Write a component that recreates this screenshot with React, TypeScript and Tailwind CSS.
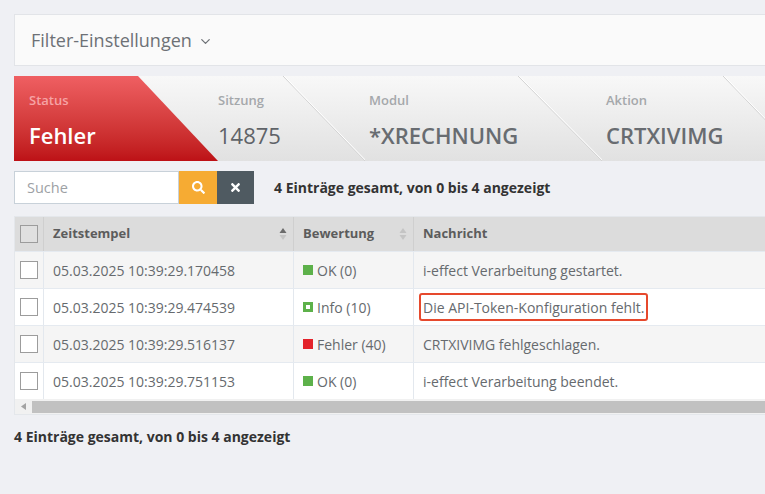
import { ChevronDown } from "lucide-react";
import { FaSearch, FaTimes } from "react-icons/fa";

type Rating = "ok" | "info" | "error";

const ROWS: { time: string; rating: Rating; label: string; msg: string; mark?: boolean }[] = [
  { time: "05.03.2025 10:39:29.170458", rating: "ok", label: "OK (0)", msg: "i-effect Verarbeitung gestartet." },
  { time: "05.03.2025 10:39:29.474539", rating: "info", label: "Info (10)", msg: "Die API-Token-Konfiguration fehlt.", mark: true },
  { time: "05.03.2025 10:39:29.516137", rating: "error", label: "Fehler (40)", msg: "CRTXIVIMG fehlgeschlagen." },
  { time: "05.03.2025 10:39:29.751153", rating: "ok", label: "OK (0)", msg: "i-effect Verarbeitung beendet." },
];

function RatingIcon({ rating }: { rating: Rating }) {
  if (rating === "info") {
    return (
      <span className="w-[10px] h-[10px] bg-[#5db14a] flex items-center justify-center shrink-0">
        <span className="w-[4px] h-[4px] bg-white" />
      </span>
    );
  }
  return (
    <span
      className={
        rating === "ok"
          ? "w-[10px] h-[10px] bg-[#5db14a] shrink-0"
          : "w-[10px] h-[10px] bg-[#e3222a] shrink-0"
      }
    />
  );
}

function SortIcon({ active }: { active?: boolean }) {
  return (
    <svg width="8" height="14" viewBox="0 0 8 14">
      <path d="M4 1 L7.5 6 L0.5 6 Z" fill={active ? "#6b6b6b" : "#c4c4c4"} />
      <path d="M4 13 L7.5 8 L0.5 8 Z" fill="#c4c4c4" />
    </svg>
  );
}

function Diagonal({ w }: { w: number }) {
  return (
    <svg width={w} height="85" viewBox={`0 0 ${w} 85`} className="shrink-0">
      <line x1="0" y1="0" x2={w} y2="85" stroke="#d3d3d3" strokeWidth="1" />
      <line x1="1.2" y1="0" x2={w + 1.2} y2="85" stroke="#ffffff" strokeWidth="1" />
    </svg>
  );
}

function Segment({ label, value, width }: { label: string; value: string; width: number }) {
  return (
    <div className="shrink-0 flex flex-col pt-[16px] pl-[4px]" style={{ width }}>
      <span className="text-[13px] leading-[16px] font-semibold text-[#a5a8ab] whitespace-nowrap">{label}</span>
      <span className="mt-[13px] text-[22px] leading-[28px] font-semibold text-[#686c71] whitespace-nowrap">{value}</span>
    </div>
  );
}

function Checkbox({ header }: { header?: boolean }) {
  return (
    <span
      className={
        header
          ? "w-[18px] h-[18px] border border-[#9c9c9c] bg-[#e0e0e0] block"
          : "w-[18px] h-[18px] border border-[#9c9c9c] bg-white block"
      }
    />
  );
}

export default function App() {
  return (
    <div className="w-[765px] h-[494px] overflow-hidden bg-[#eff0f4] font-['Open_Sans',sans-serif]">
      <div className="w-[1000px] pl-[14px] pt-[14px] flex flex-col">
        {/* Filter panel */}
        <div className="h-[52px] bg-[#fafafa] border border-[#e2e4e8] flex items-center pl-[16px] gap-[6px]">
          <span className="text-[18px] text-[#6d7176]">Filter-Einstellungen</span>
          <ChevronDown size={15} strokeWidth={2} className="text-[#6d7176] mt-[2px]" />
        </div>

        {/* Breadcrumb */}
        <div className="mt-[10px] h-[85px] flex bg-gradient-to-b from-[#f8f8f8] to-[#e1e1e1] overflow-hidden">
          <div className="w-[204px] shrink-0 flex flex-col pt-[16px] pl-[15px] bg-gradient-to-b from-[#ef5f62] to-[#bd1016] [clip-path:polygon(0_0,124px_0,204px_100%,0_100%)]">
            <span className="text-[13px] leading-[16px] font-semibold text-[#f6a3a5]">Status</span>
            <span className="mt-[13px] text-[22px] leading-[28px] font-semibold text-white">Fehler</span>
          </div>
          <div className="w-[65px] shrink-0 flex flex-col pt-[16px]">
            <span className="text-[13px] leading-[16px] font-semibold text-[#a5a8ab]">Sitzung</span>
            <span className="mt-[13px] text-[22px] leading-[28px] text-[#5f6368]">14875</span>
          </div>
          <Diagonal w={82} />
          <Segment label="Modul" value="*XRECHNUNG" width={153} />
          <Diagonal w={84} />
          <Segment label="Aktion" value="CRTXIVIMG" width={121} />
          <Diagonal w={82} />
        </div>

        {/* Search row */}
        <div className="mt-[10px] h-[33px] flex items-center">
          <div className="w-[165px] h-[33px] bg-white border border-[#c8d1d9] flex items-center pl-[12px]">
            <span className="text-[14.5px] text-[#9da1a5]">Suche</span>
          </div>
          <div className="w-[38px] h-[33px] bg-[#f6ab33] flex items-center justify-center">
            <FaSearch size={13} className="text-white" />
          </div>
          <div className="w-[37px] h-[33px] bg-[#4f5a61] flex items-center justify-center">
            <FaTimes size={13} className="text-white" />
          </div>
          <span className="ml-[20px] text-[14px] font-bold text-[#333]">
            4 Einträge gesamt, von 0 bis 4 angezeigt
          </span>
        </div>

        {/* Table */}
        <div className="mt-[12px] border border-[#e4e7eb] bg-[#f4f5f7] w-[900px]">
          <div className="flex h-[34px] bg-[#dcdcdc] text-[13px] font-bold text-[#5c5c5c]">
            <div className="w-[29px] shrink-0 flex items-center justify-center border-r border-[#cfcfcf]">
              <Checkbox header />
            </div>
            <div className="w-[250px] shrink-0 flex items-center justify-between pl-[9px] pr-[6px] border-r border-[#cfcfcf]">
              <span>Zeitstempel</span>
              <SortIcon active />
            </div>
            <div className="w-[120px] shrink-0 flex items-center justify-between pl-[9px] pr-[6px] border-r border-[#cfcfcf]">
              <span>Bewertung</span>
              <SortIcon />
            </div>
            <div className="flex-1 flex items-center pl-[9px]">
              <span>Nachricht</span>
            </div>
          </div>
          {ROWS.map((r, i) => (
            <div
              key={r.time}
              className={
                i % 2 === 0
                  ? "flex h-[37px] bg-[#f5f5f5] border-t border-[#e5eaf0] text-[14px] text-[#666a6e]"
                  : "flex h-[37px] bg-white border-t border-[#e5eaf0] text-[14px] text-[#666a6e]"
              }
            >
              <div className="w-[29px] shrink-0 flex items-center justify-center border-r border-[#e3e8ee]">
                <Checkbox />
              </div>
              <div className="w-[250px] shrink-0 flex items-center pl-[9px] border-r border-[#e3e8ee]">
                {r.time}
              </div>
              <div className="w-[120px] shrink-0 flex items-center gap-[4px] pl-[9px] border-r border-[#e3e8ee]">
                <RatingIcon rating={r.rating} />
                <span>{r.label}</span>
              </div>
              <div className="flex-1 flex items-center pl-[9px]">
                {r.mark ? (
                  <span className="-ml-[4px] px-[2px] py-[1.5px] border-2 border-[#e6492d] rounded-[3px]">{r.msg}</span>
                ) : (
                  r.msg
                )}
              </div>
            </div>
          ))}
          {/* horizontal scrollbar */}
          <div className="h-[15px] bg-[#f1f1f1] flex items-center">
            <div className="w-[17px] flex items-center justify-center">
              <svg width="5" height="7" viewBox="0 0 5 7">
                <path d="M0 3.5 L5 0 L5 7 Z" fill="#a3a3a3" />
              </svg>
            </div>
            <div className="flex-1 h-[12px] bg-[#c1c1c1]" />
          </div>
        </div>

        <div className="mt-[12px] text-[14px] leading-[20px] font-bold text-[#333]">
          4 Einträge gesamt, von 0 bis 4 angezeigt
        </div>
      </div>
    </div>
  );
}
